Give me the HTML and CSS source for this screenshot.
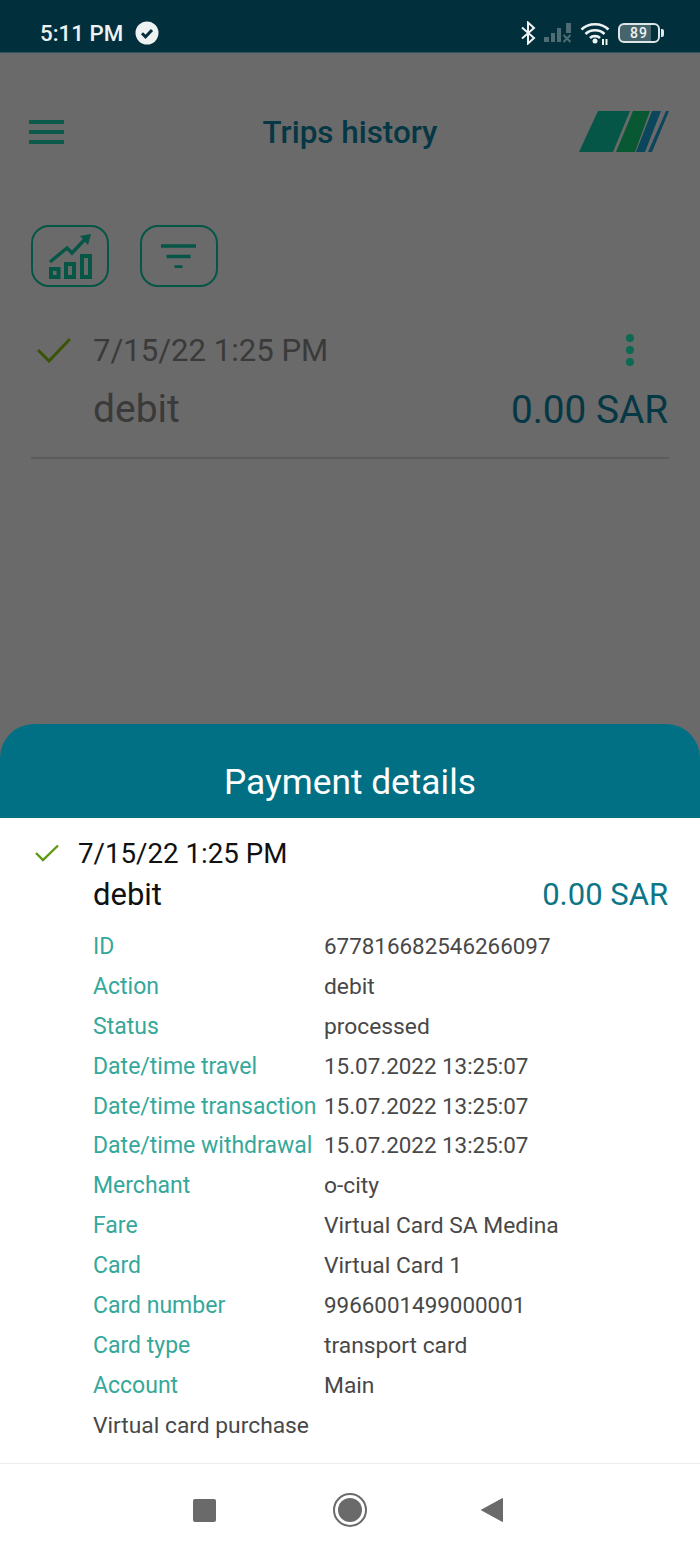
FILE: index.html
```html
<!DOCTYPE html>
<html lang="en">
<head>
<meta charset="utf-8">
<title>Trips history</title>
<link rel="stylesheet" href="styles.css">
</head>
<body>
<div class="screen">
  <header class="status">
    <div class="status-left">
      <span class="clock">5:11 PM</span>
      <svg class="ic-verified" width="24" height="24" viewBox="0 0 24 24"><circle cx="12" cy="12" r="11.500" fill="#eef2f3"/><path d="M7 12.300l3.500 3.500L17 9" fill="none" stroke="#012f3b" stroke-width="3"/></svg>
    </div>
    <div class="status-right">
      <svg width="16" height="24" viewBox="0 0 16 24"><path d="M2 6.500l12 10.500-6 5.500V1.500l6 5.500L2 17.500" fill="none" stroke="#eef2f3" stroke-width="2"/></svg>
      <svg width="28" height="22" viewBox="0 0 28 22"><g fill="#4f6c74"><rect x="0" y="15" width="5" height="5"/><rect x="7" y="11" width="4" height="9"/><rect x="13" y="6" width="4" height="14"/><rect x="22" y="1" width="5" height="10"/></g><path d="M19.500 13l7 7M26.500 13l-7 7" stroke="#4f6c74" stroke-width="2"/></svg>
      <svg width="30" height="24" viewBox="0 0 30 24"><g fill="none" stroke="#eef2f3" stroke-width="2.600"><path d="M1.500 8.500c7-7 20-7 27 0"/><path d="M5.500 13c5-5 14-5 19 0"/><path d="M10 17c2.500-2.500 7.500-2.500 10 0"/></g><circle cx="15" cy="20" r="2.500" fill="#eef2f3"/><path d="M23 18v6M26.500 18v6" stroke="#eef2f3" stroke-width="2"/></svg>
      <div class="battery"><div class="battery-body"><span class="battery-num">89</span></div><div class="battery-tip"></div></div>
    </div>
  </header>

  <main class="main">
    <div class="topbar">
      <div class="burger"><i></i><i></i><i></i></div>
      <h1 class="title">Trips history</h1>
      <svg class="logo" width="90" height="42" viewBox="0 0 90 42"><path d="M19 0h32L34 41H0z" fill="#065647"/><path d="M54 0h17L56 41H37z" fill="#095834"/><path d="M73 0h9L66 41h-9z" fill="#0a465c"/><path d="M87 0h3L73 41h-4z" fill="#0a465c"/></svg>
    </div>

    <div class="tools">
      <button class="tool" type="button">
        <svg width="46" height="48" viewBox="0 0 46 48"><path d="M3 30l17-14 5 5L41 4" fill="none" stroke="#065647" stroke-width="3.400"/><path d="M33 4l11-2-3 11z" fill="#065647"/><g fill="none" stroke="#065647" stroke-width="4"><rect x="4" y="37" width="7.500" height="8"/><rect x="19" y="32" width="8" height="13"/><rect x="35" y="24" width="8" height="21"/></g></svg>
      </button>
      <button class="tool" type="button">
        <svg width="36" height="24" viewBox="0 0 36 24"><path d="M0 2h35M5.500 12.500h24M13.500 23h8" stroke="#065647" stroke-width="3.400"/></svg>
      </button>
    </div>

    <div class="trip">
      <div class="trip-line">
        <svg class="trip-check" width="34" height="26" viewBox="0 0 34 26"><path d="M1 13l11 11L33 2" fill="none" stroke="#3a5406" stroke-width="3"/></svg>
        <span class="trip-date">7/15/22 1:25 PM</span>
        <div class="dots"><i></i><i></i><i></i></div>
      </div>
      <div class="trip-sub">
        <span class="trip-type">debit</span>
        <span class="trip-sum">0.00 SAR</span>
      </div>
    </div>
  </main>

  <section class="sheet">
    <h2 class="sheet-head">Payment details</h2>
    <div class="sheet-body">
      <div class="pay-line">
        <svg width="24" height="18" viewBox="0 0 24 18"><path d="M1 9l7 7L23 1.500" fill="none" stroke="#5f9a12" stroke-width="2.400"/></svg>
        <span>7/15/22 1:25 PM</span>
      </div>
      <div class="pay-sub">
        <span class="pay-type">debit</span>
        <span class="pay-sum">0.00 SAR</span>
      </div>
      <dl class="details">
        <div class="row"><dt>ID</dt><dd class="num">677816682546266097</dd></div>
        <div class="row"><dt>Action</dt><dd>debit</dd></div>
        <div class="row"><dt>Status</dt><dd>processed</dd></div>
        <div class="row"><dt>Date/time travel</dt><dd class="num">15.07.2022 13:25:07</dd></div>
        <div class="row"><dt>Date/time transaction</dt><dd class="num">15.07.2022 13:25:07</dd></div>
        <div class="row"><dt>Date/time withdrawal</dt><dd class="num">15.07.2022 13:25:07</dd></div>
        <div class="row"><dt>Merchant</dt><dd>o-city</dd></div>
        <div class="row"><dt>Fare</dt><dd>Virtual Card SA Medina</dd></div>
        <div class="row"><dt>Card</dt><dd>Virtual Card 1</dd></div>
        <div class="row"><dt>Card number</dt><dd class="num">9966001499000001</dd></div>
        <div class="row"><dt>Card type</dt><dd>transport card</dd></div>
        <div class="row"><dt>Account</dt><dd>Main</dd></div>
      </dl>
      <p class="note">Virtual card purchase</p>
    </div>
  </section>

  <nav class="navbar">
    <div class="nav-square"></div>
    <div class="nav-home"><div class="nav-home-dot"></div></div>
    <svg class="nav-back" width="22" height="26" viewBox="0 0 22 26"><path d="M21.500 1.500v23L0.500 13z" fill="#6a6a6a" stroke="#6a6a6a" stroke-linejoin="round"/></svg>
  </nav>
</div>
</body>
</html>
```
FILE: styles.css
```css
* { box-sizing: border-box; }
html, body { margin: 0; padding: 0; }
body { font-family: Roboto, "Liberation Sans", sans-serif; background: #fff; }
.screen { width: 700px; height: 1556px; display: flex; flex-direction: column; background: #6a6a6a; overflow: hidden; }

.status { height: 53px; flex: none; background: #012f3b; border-bottom: 1px solid #2d5660; display: flex; justify-content: space-between; align-items: center; padding: 14px 36px 0 40px; color: #eef2f3; }
.status-left { display: flex; align-items: center; gap: 12px; }
.clock { font-size: 22.300px; font-weight: 500; }
.status-right { display: flex; align-items: center; gap: 8px; }
.battery { display: flex; align-items: center; gap: 1px; }
.battery-body { width: 42px; height: 20px; border: 2.500px solid #dfe6e8; border-radius: 6px; display: flex; align-items: center; justify-content: center; background: linear-gradient(90deg, #46646c 0 82%, transparent 82%); }
.battery-num { font-size: 14px; font-weight: 500; letter-spacing: 1px; color: #eef2f3; }
.battery-tip { width: 3px; height: 8px; background: #dfe6e8; border-radius: 0 2px 2px 0; }

.main { flex: 1; padding: 39px 31px 0; min-height: 0; }
.topbar { height: 80px; display: grid; grid-template-columns: 1fr auto 1fr; align-items: center; }
.burger { width: 35px; display: flex; flex-direction: column; gap: 6px; margin-left: -2px; }
.burger i { display: block; height: 4px; background: #0c5a49; }
.title { margin: 0; font-size: 31.400px; font-weight: 500; color: #053745; }
.logo { justify-self: end; }

.tools { display: flex; gap: 31px; margin-top: 53px; }
.tool { width: 78px; height: 62px; padding: 0; background: transparent; border: 2px solid #065647; border-radius: 18px; display: flex; align-items: center; justify-content: center; }

.trip { margin-top: 38px; border-bottom: 2px solid #5c5c5c; padding-bottom: 24px; }
.trip-line { display: flex; align-items: center; height: 50px; padding-left: 6px; }
.trip-check { flex: none; }
.trip-date { margin-left: 22px; font-size: 31.100px; color: #3a3a3a; flex: 1; }
.dots { display: flex; flex-direction: column; gap: 4px; margin-right: 35px; }
.dots i { display: block; width: 8px; height: 8px; border-radius: 50%; background: #0b6a51; }
.trip-sub { display: flex; justify-content: space-between; align-items: center; margin-top: 10px; padding-left: 62px; height: 48px; }
.trip-type { font-size: 39px; color: #3a3a3a; }
.trip-sum { font-size: 38.700px; color: #053745; margin-right: 1px; }

.sheet { flex: none; }
.sheet-head { margin: 0; height: 94px; background: #017084; color: #fff; border-radius: 34px 34px 0 0; display: flex; align-items: center; justify-content: center; font-size: 35.300px; font-weight: 400; padding-top: 21px; }
.sheet-body { background: #fff; padding: 14px 32px 0 31px; height: 645px; }
.pay-line { display: flex; align-items: center; gap: 19px; height: 42px; padding-left: 4px; font-size: 27.700px; color: #111; }
.pay-sub { display: flex; justify-content: space-between; align-items: center; height: 40px; padding-left: 62px; font-size: 31px; }
.pay-type { color: #111; }
.pay-sum { color: #0b7686; }
.details { margin: 13px 0 0; padding-left: 62px; }
.row { display: flex; height: 39.900px; align-items: baseline; font-size: 23px; line-height: 39.900px; }
.row dt { width: 231px; flex: none; color: #35a89b; white-space: nowrap; }
.row dd { margin: 0; color: #484848; white-space: nowrap; font-size: 22.800px; }
.row dd.num { font-size: 22.400px; }
.note { margin: 0; padding-left: 62px; height: 40px; display: flex; align-items: center; font-size: 22.800px; color: #484848; }

.navbar { height: 93px; flex: none; background: #fff; border-top: 1px solid #ececec; display: flex; align-items: center; justify-content: center; gap: 114px; padding-right: 5px; }
.nav-square { width: 23px; height: 23px; background: #6a6a6a; border-radius: 2px; margin-right: 3px; }
.nav-home { width: 34px; height: 34px; border: 2.500px solid #6a6a6a; border-radius: 50%; display: flex; align-items: center; justify-content: center; }
.nav-home-dot { width: 24px; height: 24px; border-radius: 50%; background: #6a6a6a; }
```
